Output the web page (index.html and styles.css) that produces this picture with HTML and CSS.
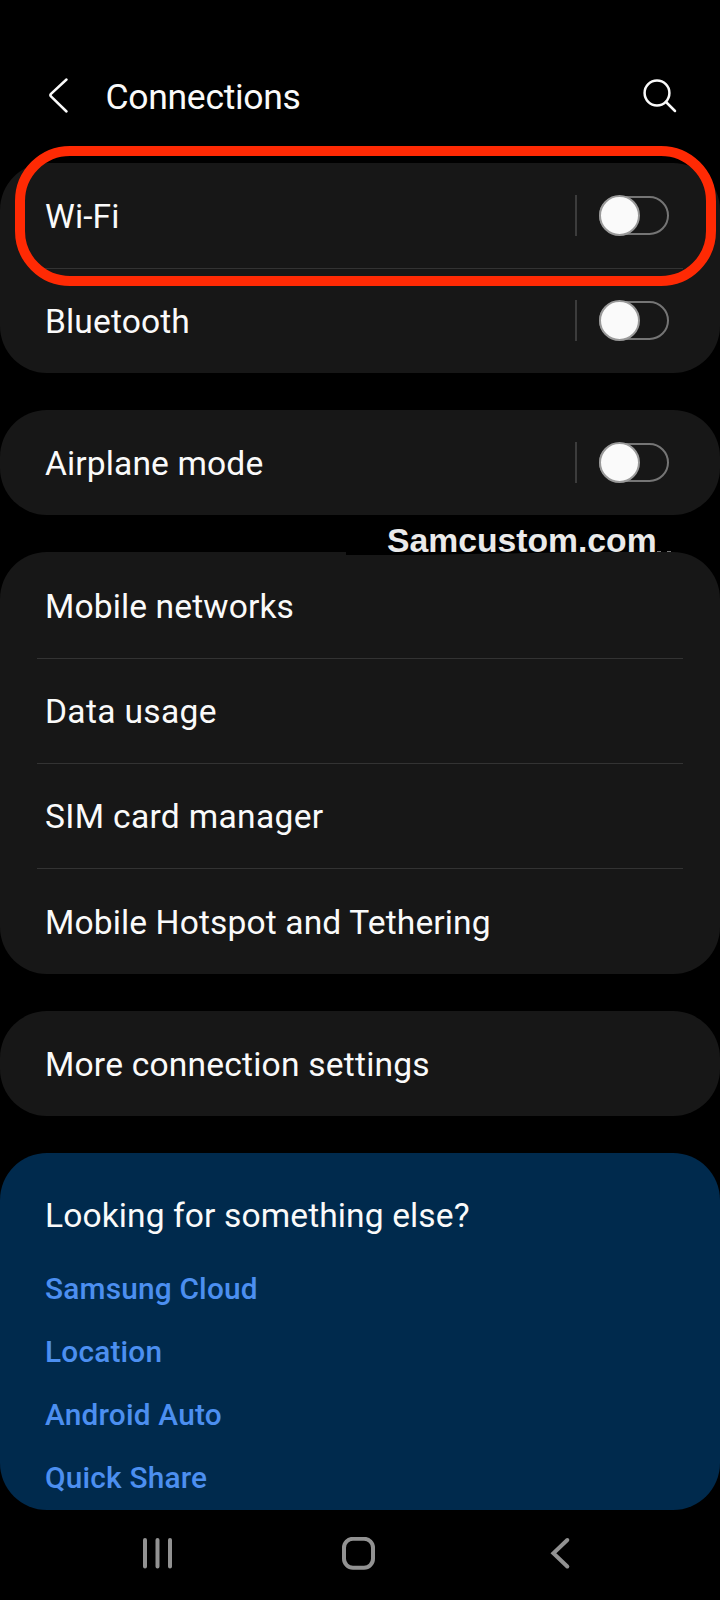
FILE: index.html
```html
<!DOCTYPE html>
<html lang="en">
<head>
<meta charset="utf-8">
<title>Connections</title>
<link rel="stylesheet" href="styles.css">
</head>
<body>
<div class="screen">
  <header class="header">
    <svg class="back" width="24" height="40" viewBox="0 0 24 40"><path d="M20.5 4.5 L5 18.9 Q3.8 20.2 5 21.5 L20.5 36.5" /></svg>
    <h1 class="title">Connections</h1>
    <svg class="search" width="36" height="36" viewBox="0 0 36 36"><circle cx="15" cy="15" r="12.4"/><path d="M24 24 L33 33"/></svg>
  </header>
  <main class="list">
    <section class="card">
      <div class="row highlighted"><span>Wi-Fi</span><i class="bar"></i><i class="toggle"></i></div>
      <div class="row"><span>Bluetooth</span><i class="bar"></i><i class="toggle"></i></div>
    </section>
    <section class="card">
      <div class="row last"><span>Airplane mode</span><i class="bar"></i><i class="toggle"></i></div>
    </section>
    <section class="card networks">
      <div class="row tall">Mobile networks</div>
      <div class="row loose">Data usage</div>
      <div class="row loose">SIM card manager</div>
      <div class="row tall last">Mobile Hotspot and Tethering</div>
      <div class="notch"></div>
      <div class="watermark">Samcustom.com</div>
      <div class="specks"></div>
    </section>
    <section class="card">
      <div class="row semi last">More connection settings</div>
    </section>
    <section class="card related">
      <h2 class="question">Looking for something else?</h2>
      <a class="link">Samsung Cloud</a>
      <a class="link">Location</a>
      <a class="link">Android Auto</a>
      <a class="link">Quick Share</a>
    </section>
  </main>
  <nav class="nav">
    <svg class="recents" width="32" height="34" viewBox="0 0 32 34"><path d="M4 3V29.5M16.5 3V29.5M29 3V29.5"/></svg>
    <svg class="home" width="34" height="34" viewBox="0 0 34 34"><rect x="2" y="1.8" width="29" height="29" rx="9"/></svg>
    <svg width="22" height="34" viewBox="0 0 22 34"><path d="M17.3 3L3.4 16.3L17.3 29.5"/></svg>
  </nav>
</div>
</body>
</html>
```
FILE: styles.css
```css
*, *::before, *::after { box-sizing: border-box; }
body { margin: 0; background: #000; }
.screen {
  width: 720px;
  height: 1600px;
  display: flex;
  flex-direction: column;
  overflow: hidden;
  background: #000;
  color: #fafafa;
  font-family: Roboto, sans-serif;
}
.header {
  height: 163px;
  padding: 75px 42px 0 46px;
  display: flex;
  align-items: flex-start;
}
.header svg { fill: none; stroke: #fafafa; stroke-width: 2.5; stroke-linecap: round; }
.title {
  flex: 1;
  margin: 1px 0 0 35.5px;
  font-size: 35.5px;
  line-height: 42px;
  font-weight: 400;
  letter-spacing: -0.3px;
}
.search { margin-top: 3px; }
.list { display: flex; flex-direction: column; gap: 37px; }
.card {
  position: relative;
  border-radius: 47px;
  background: #171717;
}
.row {
  position: relative;
  height: 105px;
  padding: 2px 51px 0 45px;
  display: flex;
  align-items: center;
  font-size: 33.6px;
  letter-spacing: 0.12px;
}
.row span { flex: 1; }
.row.tall { height: 106px; }
.row.loose { letter-spacing: 0.32px; }
.row.semi { letter-spacing: 0.2px; }
.row:not(.last):not(:last-child)::after {
  content: "";
  position: absolute;
  left: 37px;
  right: 37px;
  bottom: -1px;
  height: 1px;
  background: #333;
}
.bar { width: 2px; height: 41px; margin: -2px 22px 0 0; background: #3c3c3c; }
.toggle {
  position: relative;
  width: 70px;
  height: 39px;
  margin-top: -2px;
  border: 2px solid #757575;
  border-radius: 20px;
}
.toggle::before {
  content: "";
  position: absolute;
  left: -2px;
  top: -3px;
  width: 41px;
  height: 41px;
  border: 2px solid #999;
  border-radius: 50%;
  background: #fafafa;
}
/* Red callout ring drawn over the Wi-Fi row */
.highlighted::before {
  content: "";
  position: absolute;
  z-index: 1;
  left: 15px;
  right: 4px;
  top: -17px;
  height: 140px;
  border: 10.5px solid #ff2a04;
  border-radius: 55px;
}
/* Site mark sitting in the gap above the networks card */
.watermark {
  position: absolute;
  left: 387px;
  top: -31px;
  font: bold 33.7px/38px "Liberation Sans", sans-serif;
  color: #eaeaea;
}
.notch {
  position: absolute;
  left: 346px;
  top: 0;
  width: 240px;
  height: 3px;
  background: #000;
  clip-path: polygon(0 0, 100% 0, 30% 100%, 0 100%);
}
.specks {
  position: absolute;
  left: 657px;
  top: -1px;
  width: 14px;
  height: 1px;
  background: linear-gradient(90deg, #777 4px, transparent 4px 10px, #777 10px);
}
.related {
  height: 357px;
  padding: 41px 45px 0;
  display: flex;
  flex-direction: column;
  background: #002a4d;
}
.question { margin: 0 0 23px; font-size: 33.6px; line-height: 44px; font-weight: 400; letter-spacing: 0.1px; }
.link {
  flex: none;
  height: 63px;
  font-size: 29.8px;
  line-height: 56px;
  font-weight: 500;
  letter-spacing: 0.2px;
  color: #4c8ff0;
}
.nav {
  flex: 1;
  padding: 27px 0 0 141px;
  display: flex;
  align-items: flex-start;
}
.nav svg { fill: none; stroke: #929292; stroke-width: 4; stroke-linecap: round; }
.nav .recents { margin-right: 168.5px; }
.nav .home { margin-right: 174px; }
```
